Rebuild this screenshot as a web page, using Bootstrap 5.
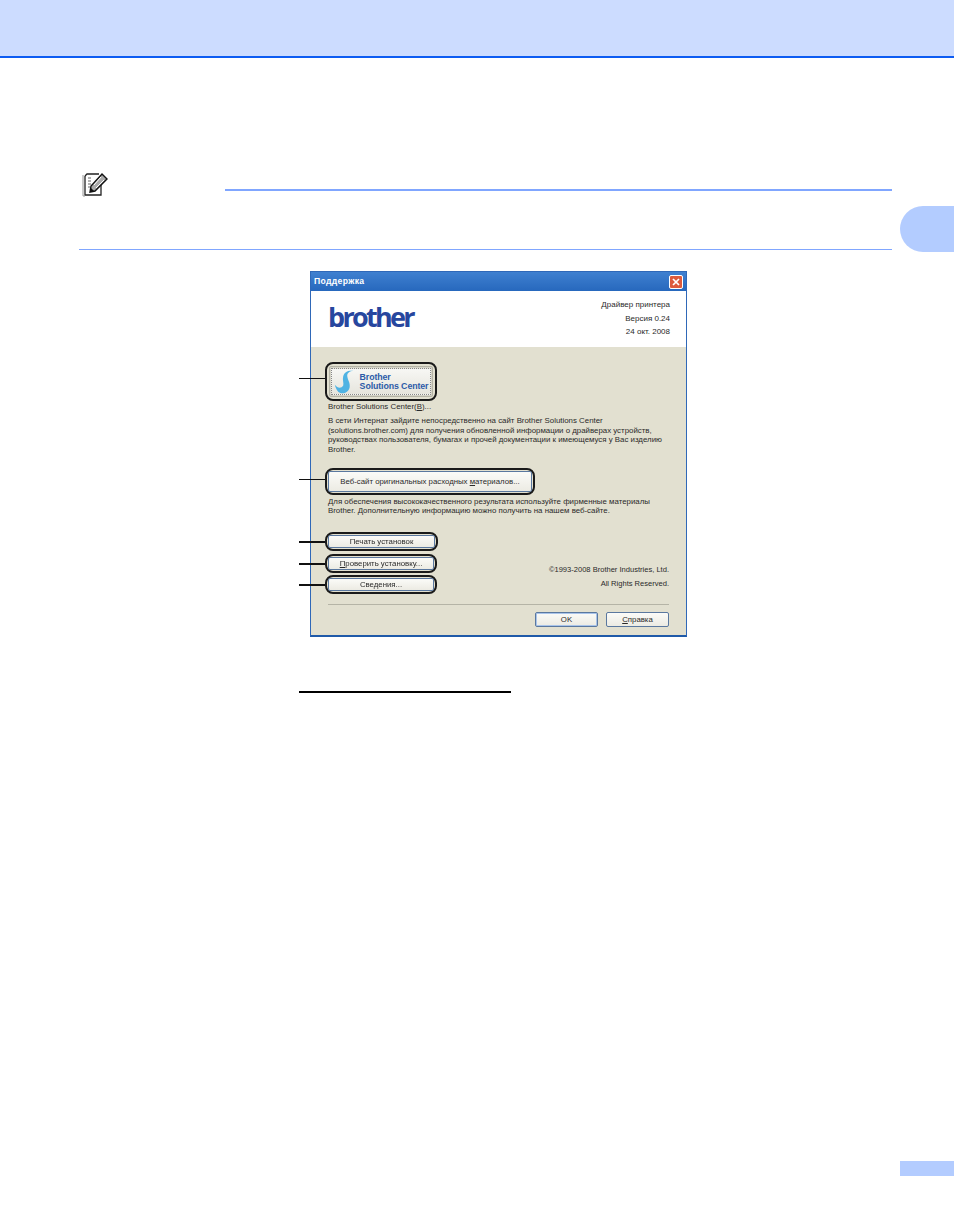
<!DOCTYPE html>
<html lang="ru">
<head>
  <meta charset="UTF-8">
  <meta name="viewport" content="width=device-width, initial-scale=1.0">
  <title>Поддержка</title>
  <link href="https://cdn.jsdelivr.net/npm/bootstrap@5.3.0/dist/css/bootstrap.min.css" rel="stylesheet">
  <style>
    body { background: #fff; font-family: "Liberation Sans", Arial, sans-serif; height: 1231px; overflow: hidden; }
    .top-band { height: 58px; background: #ccdcff; border-bottom: 2px solid #0d5cf2; }
    .page-main { width: 813px; margin-left: 79px; }
    .side-col { width: 54px; margin-left: 8px; }
    .chapter-tab { height: 46px; margin-top: 148px; background: #b3ccff; border-radius: 23px 0 0 23px; }
    .note-row { height: 73px; margin-top: 58px; padding-top: 56px; }
    .note-icon { width: 26px; height: 25px; margin-left: 3px; flex: none; }
    .note-rule { height: 2px; background: #80a6ff; margin-left: 146px; }
    .note-end { height: 1px; background: #80a6ff; margin-top: 58px; }
    .dlg { width: 377px; height: 366px; margin-left: 231px; margin-top: 21px; background: #e2e0d0; border: 1px solid #2f68b8; border-bottom: 2px solid #1f5aa8; color: #2a2a2a; font-size: 7.86px; line-height: 9.4px; filter: blur(.4px); }
    .dlg-title { height: 19px; background: linear-gradient(#3f80d0, #2768bd); color: #fff; font-weight: 700; font-size: 8.6px; letter-spacing: .35px; padding: 0 3px; }
    .dlg-title-text { padding-top: 1px; }
    .dlg-close { width: 14px; height: 14px; background: #dd5a3c; border: 1px solid #fff; border-radius: 2px; }
    .dlg-head { height: 56px; background: #fff; padding: 0 16px 0 17px; }
    .logo-word { font-family: "Open Sans", sans-serif; font-weight: 700; font-size: 27px; line-height: 27px; letter-spacing: -2.7px; color: #27469e; margin-top: 12px; }
    .head-info { text-align: right; padding-top: 7px; line-height: 13.6px; font-size: 8px; }
    .dlg-body { padding: 0 17px; }
    .callout { position: relative; border: 2px solid #1a1a1a; border-radius: 8px; margin-left: -3px; padding: 1px; background: #e2e0d0; }
    .callout::before { content: ""; position: absolute; left: -28px; top: 50%; width: 26px; height: 1.4px; background: #111; }
    .xp-btn { display: flex; align-items: center; justify-content: center; width: 100%; height: 100%; padding: 0; border: 1px solid #5a789f; border-radius: 2px; background: linear-gradient(#fbfbf8, #ecebe3); color: #2a2a2a; font-size: 7.8px; line-height: 9px; }
    .callout-swan { width: 112px; height: 39px; margin-top: 15px; padding: 2px; }
    .callout-swan::before { top: 14px; }
    .swan-btn { background: #d5d4c8; border: 1px solid #b5b4a6; padding: 1px; }
    .swan-face { width: 100%; height: 100%; border: 1px dotted #888; background: linear-gradient(#f7f7f4, #e6e5dd); }
    .swan-text { color: #2c5ba8; font-weight: 700; font-size: 8.8px; line-height: 8.6px; text-align: left; letter-spacing: -.1px; white-space: nowrap; }
    .callout-web { width: 210px; height: 27px; margin-top: 14px; }
    .callout-web::before { top: 9px; }
    .callout-print { width: 113px; height: 19px; margin-top: 16px; }
    .callout-check { width: 112px; height: 19px; margin-top: 3px; }
    .callout-info { width: 112px; height: 19px; margin-top: 2px; }
    .text-b { padding-top: 1px; }
    .para-b { margin: 5px 0 0; }
    .para-w { margin: 2px 0 0; }
    .copy-lines { text-align: right; line-height: 14px; font-size: 7.55px; padding-bottom: 3px; }
    .dlg-sep { height: 1px; background: #b5b4a6; margin-top: 10px; }
    .foot-row { margin-top: 7px; }
    .foot-btn { width: 63px; height: 15px; }
    .foot-btn.is-default { box-shadow: inset 0 0 0 1px #a9c4ea; }
    .ref-line { width: 212px; height: 2px; background: #000; margin: 54px 0 0 220px; }
    .page-end { width: 54px; height: 15px; background: #b3ccff; margin: 468px 0 0 900px; }
  </style>
</head>
<body>
  <div class="top-band"></div>
  <div class="d-flex">
    <div class="page-main">
      <div class="note-row">
        <div class="d-flex">
          <svg class="note-icon" viewBox="0 0 26 25">
            <path d="M3 4 L3 23 H19 V13" fill="#fff" stroke="#222" stroke-width="1.3"/>
            <path d="M3 4 L5 2 H17" fill="none" stroke="#222" stroke-width="1.3"/>
            <path d="M1 3 V24 H3" fill="none" stroke="#999" stroke-width="1"/>
            <path d="M6 6h3M6 9h3M6 12h3M6 15h2" stroke="#999" stroke-width="1.5"/>
            <path d="M20 2 L25 7 L13 19 L8 20 L9 14 Z" fill="#aaa" stroke="#111" stroke-width="1.4"/>
            <path d="M12 13 L19 5 M14 16 L22 8" stroke="#fff" stroke-width="1"/>
            <path d="M8 20 L9 16 L12 19 Z" fill="#111"/>
          </svg>
        </div>
      </div>
      <div class="note-rule"></div>
      <div class="note-end"></div>

      <div class="dlg">
        <div class="dlg-title d-flex align-items-center justify-content-between">
          <span class="dlg-title-text">Поддержка</span>
          <span class="dlg-close d-flex align-items-center justify-content-center">
            <svg width="8" height="8" viewBox="0 0 8 8"><path d="M1 1 L7 7 M7 1 L1 7" stroke="#fff" stroke-width="1.7"/></svg>
          </span>
        </div>
        <div class="dlg-head d-flex justify-content-between">
          <div class="logo-word">brother</div>
          <div class="head-info">Драйвер принтера<br>Версия 0.24<br>24 окт. 2008</div>
        </div>
        <div class="dlg-body">
          <div class="callout callout-swan">
            <div class="xp-btn swan-btn">
              <div class="swan-face d-flex align-items-center justify-content-center gap-1">
                <svg width="22" height="24" viewBox="0 0 22 26">
                  <path d="M0 16 C3 20 7 20 9 17 C10 14 8 11 9 7 C10 2 15 0 20 1 C16 1 13 3 13.500 7 C14 11 17 14 16 19 C15 24 10 26 6 25 C3 24 1 20 0 16 Z" fill="#4fb3e3"/>
                </svg>
                <div class="swan-text">Brother<br>Solutions Center</div>
              </div>
            </div>
          </div>
          <div class="text-b">Brother Solutions Center(<u>B</u>)...</div>
          <p class="para-b">В сети Интернат зайдите непосредственно на сайт Brother Solutions Center<br>(solutions.brother.com) для получения обновленной информации о драйверах устройств,<br>руководствах пользователя, бумагах и прочей документации к имеющемуся у Вас изделию<br>Brother.</p>
          <div class="callout callout-web">
            <button type="button" class="xp-btn"><span>Веб-сайт оригинальных расходных <u>м</u>атериалов...</span></button>
          </div>
          <p class="para-w">Для обеспечения высококачественного результата используйте фирменные материалы<br>Brother. Дополнительную информацию можно получить на нашем веб-сайте.</p>
          <div class="d-flex justify-content-between align-items-end">
            <div>
              <div class="callout callout-print">
                <button type="button" class="xp-btn">Печать установок</button>
              </div>
              <div class="callout callout-check">
                <button type="button" class="xp-btn"><span><u>П</u>роверить установку...</span></button>
              </div>
              <div class="callout callout-info">
                <button type="button" class="xp-btn">Сведения...</button>
              </div>
            </div>
            <div class="copy-lines">©1993-2008 Brother Industries, Ltd.<br>All Rights Reserved.</div>
          </div>
          <div class="dlg-sep"></div>
          <div class="foot-row d-flex justify-content-end gap-2">
            <button type="button" class="xp-btn foot-btn is-default">OK</button>
            <button type="button" class="xp-btn foot-btn"><span><u>С</u>правка</span></button>
          </div>
        </div>
      </div>
      <div class="ref-line"></div>
    </div>
    <div class="side-col">
      <div class="chapter-tab"></div>
    </div>
  </div>
  <div class="page-end"></div>
</body>
</html>
